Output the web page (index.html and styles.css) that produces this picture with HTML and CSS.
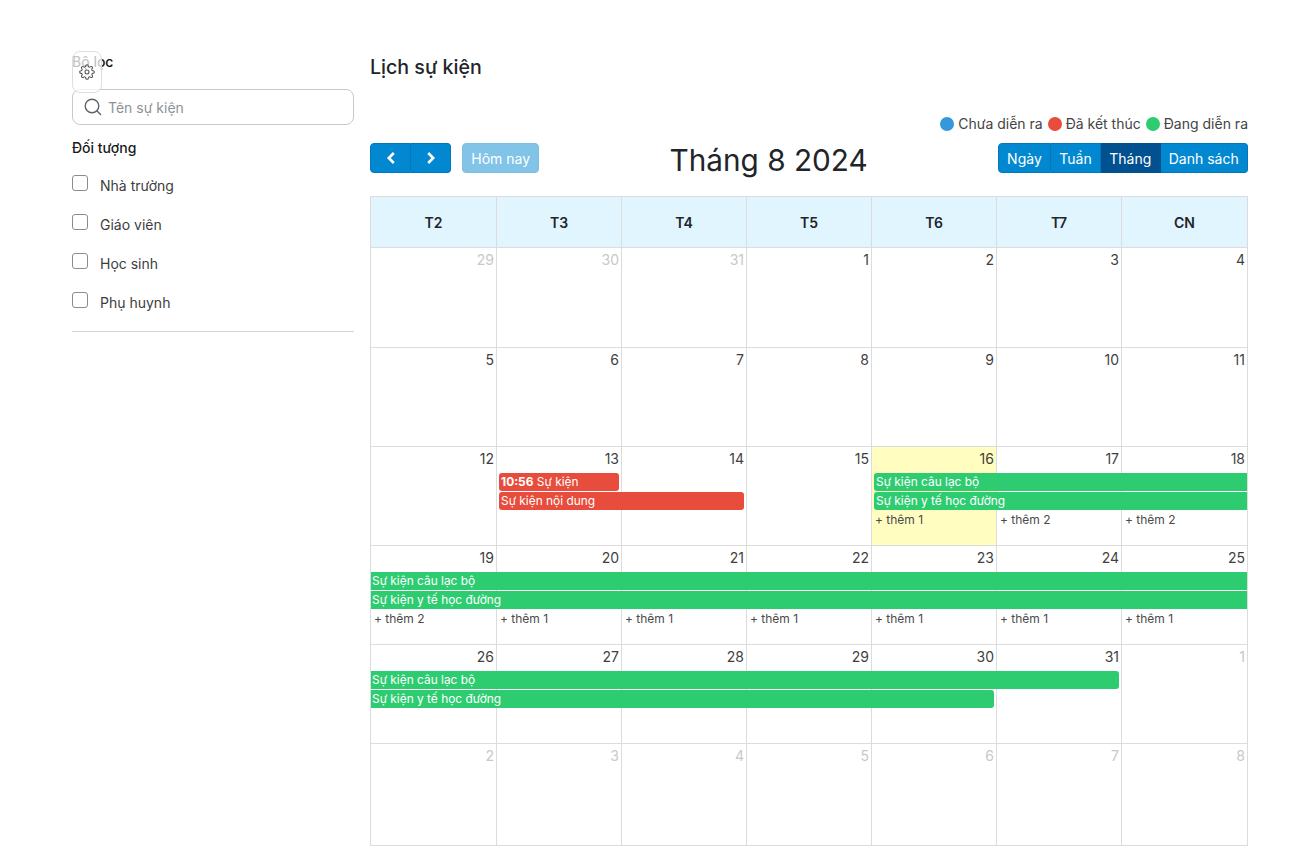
FILE: index.html
```html
<!DOCTYPE html>
<html lang="vi">
<head>
    <meta charset="UTF-8">
    <meta name="viewport" content="width=device-width, initial-scale=1.0">
    <title>Lịch sự kiện</title>
    <link rel="stylesheet" href="styles.css">
</head>
<body>
    <div class="page">
        <aside class="sidebar">
            <!-- settings button sits on top of the filter title -->
            <button class="gear-btn" type="button" aria-label="Cài đặt">
                <svg width="16" height="16" viewBox="0 0 24 24" fill="none" stroke="#555" stroke-width="1.6" stroke-linecap="round" stroke-linejoin="round"><circle cx="12" cy="12" r="3"/><path d="M19.4 15a1.65 1.65 0 0 0 .33 1.82l.06.06a2 2 0 0 1 0 2.83 2 2 0 0 1-2.83 0l-.06-.06a1.65 1.65 0 0 0-1.82-.33 1.65 1.65 0 0 0-1 1.51V21a2 2 0 0 1-2 2 2 2 0 0 1-2-2v-.09A1.65 1.65 0 0 0 9 19.4a1.65 1.65 0 0 0-1.82.33l-.06.06a2 2 0 0 1-2.83 0 2 2 0 0 1 0-2.83l.06-.06a1.65 1.65 0 0 0 .33-1.82 1.65 1.65 0 0 0-1.51-1H3a2 2 0 0 1-2-2 2 2 0 0 1 2-2h.09A1.65 1.65 0 0 0 4.6 9a1.65 1.65 0 0 0-.33-1.82l-.06-.06a2 2 0 0 1 0-2.83 2 2 0 0 1 2.83 0l.06.06a1.65 1.65 0 0 0 1.82.33H9a1.65 1.65 0 0 0 1-1.51V3a2 2 0 0 1 2-2 2 2 0 0 1 2 2v.09a1.65 1.65 0 0 0 1 1.51 1.65 1.65 0 0 0 1.82-.33l.06-.06a2 2 0 0 1 2.83 0 2 2 0 0 1 0 2.83l-.06.06a1.65 1.65 0 0 0-.33 1.82V9a1.65 1.65 0 0 0 1.51 1H21a2 2 0 0 1 2 2 2 2 0 0 1-2 2h-.09a1.65 1.65 0 0 0-1.51 1z"/></svg>
            </button>
            <h3 class="filter-title">Bộ lọc</h3>
            <div class="search">
                <svg width="20" height="20" viewBox="0 0 20 20" fill="none" stroke="#5f6368" stroke-width="1.4" stroke-linecap="round"><circle cx="9" cy="9" r="6.8"/><path d="M14 14l3.6 3.6"/></svg>
                <input type="text" placeholder="Tên sự kiện">
            </div>
            <h4 class="group-title">Đối tượng</h4>
            <ul class="checks">
                <li><span class="box"></span>Nhà trường</li>
                <li><span class="box"></span>Giáo viên</li>
                <li><span class="box"></span>Học sinh</li>
                <li><span class="box"></span>Phụ huynh</li>
            </ul>
            <hr class="divider">
        </aside>

        <main class="main">
            <h2 class="page-title">Lịch sự kiện</h2>
            <div class="legend">
                <span class="dot blue"></span>Chưa diễn ra
                <span class="dot red"></span>Đã kết thúc
                <span class="dot green"></span>Đang diễn ra
            </div>
            <div class="toolbar">
                <div class="toolbar-left">
                    <div class="btn-group">
                        <button class="btn btn-icon" type="button" aria-label="Trước"><svg width="14" height="14" viewBox="0 0 14 14" fill="none" stroke="#fff" stroke-width="2.6"><path d="M9.8 2L4.8 7l5 5"/></svg></button>
                        <button class="btn btn-icon" type="button" aria-label="Sau"><svg width="14" height="14" viewBox="0 0 14 14" fill="none" stroke="#fff" stroke-width="2.6"><path d="M4.2 2l5 5-5 5"/></svg></button>
                    </div>
                    <button class="btn btn-today" type="button">Hôm nay</button>
                </div>
                <h2 class="month-title">Tháng 8 2024</h2>
                <div class="btn-group">
                    <button class="btn" type="button">Ngày</button>
                    <button class="btn" type="button">Tuần</button>
                    <button class="btn active" type="button">Tháng</button>
                    <button class="btn" type="button">Danh sách</button>
                </div>
            </div>

            <div class="calendar">
                <div class="head-row">
                    <div class="head-cell">T2</div>
                    <div class="head-cell">T3</div>
                    <div class="head-cell">T4</div>
                    <div class="head-cell">T5</div>
                    <div class="head-cell">T6</div>
                    <div class="head-cell">T7</div>
                    <div class="head-cell">CN</div>
                </div>

                <div class="week week-first">
                    <div class="day c1 other">29</div>
                    <div class="day c2 other">30</div>
                    <div class="day c3 other">31</div>
                    <div class="day c4">1</div>
                    <div class="day c5">2</div>
                    <div class="day c6">3</div>
                    <div class="day c7">4</div>
                </div>

                <div class="week">
                    <div class="day c1">5</div>
                    <div class="day c2">6</div>
                    <div class="day c3">7</div>
                    <div class="day c4">8</div>
                    <div class="day c5">9</div>
                    <div class="day c6">10</div>
                    <div class="day c7">11</div>
                </div>

                <div class="week">
                    <div class="day c1">12</div>
                    <div class="day c2">13</div>
                    <div class="day c3">14</div>
                    <div class="day c4">15</div>
                    <div class="day c5 today">16</div>
                    <div class="day c6">17</div>
                    <div class="day c7">18</div>
                    <div class="event bg-red r2 c2 s1 end-gap start-gap"><b>10:56</b> Sự kiện</div>
                    <div class="event bg-red r3 c2 s2 end-gap start-gap">Sự kiện nội dung</div>
                    <div class="event bg-green r2 c5 s3 start-gap open-end">Sự kiện câu lạc bộ</div>
                    <div class="event bg-green r3 c5 s3 start-gap open-end">Sự kiện y tế học đường</div>
                    <div class="more r4 c5">+ thêm 1</div>
                    <div class="more r4 c6">+ thêm 2</div>
                    <div class="more r4 c7">+ thêm 2</div>
                </div>

                <div class="week">
                    <div class="day c1">19</div>
                    <div class="day c2">20</div>
                    <div class="day c3">21</div>
                    <div class="day c4">22</div>
                    <div class="day c5">23</div>
                    <div class="day c6">24</div>
                    <div class="day c7">25</div>
                    <div class="event bg-green r2 c1 s7 open-start open-end">Sự kiện câu lạc bộ</div>
                    <div class="event bg-green r3 c1 s7 open-start open-end">Sự kiện y tế học đường</div>
                    <div class="more r4 c1">+ thêm 2</div>
                    <div class="more r4 c2">+ thêm 1</div>
                    <div class="more r4 c3">+ thêm 1</div>
                    <div class="more r4 c4">+ thêm 1</div>
                    <div class="more r4 c5">+ thêm 1</div>
                    <div class="more r4 c6">+ thêm 1</div>
                    <div class="more r4 c7">+ thêm 1</div>
                </div>

                <div class="week">
                    <div class="day c1">26</div>
                    <div class="day c2">27</div>
                    <div class="day c3">28</div>
                    <div class="day c4">29</div>
                    <div class="day c5">30</div>
                    <div class="day c6">31</div>
                    <div class="day c7 other">1</div>
                    <div class="event bg-green r2 c1 s6 open-start end-gap">Sự kiện câu lạc bộ</div>
                    <div class="event bg-green r3 c1 s5 open-start end-gap">Sự kiện y tế học đường</div>
                </div>

                <div class="week week-last">
                    <div class="day c1 other">2</div>
                    <div class="day c2 other">3</div>
                    <div class="day c3 other">4</div>
                    <div class="day c4 other">5</div>
                    <div class="day c5 other">6</div>
                    <div class="day c6 other">7</div>
                    <div class="day c7 other">8</div>
                </div>
            </div>
        </main>
    </div>
</body>
</html>
```

FILE: styles.css
```css
* {
    box-sizing: border-box;
}

body {
    margin: 0;
    font-family: Inter, "Noto Sans", sans-serif;
    font-size: 14px;
    color: #212529;
    background-color: #fff;
}

.page {
    display: flex;
    gap: 16px;
    padding: 0 42px 0 72px;
}

/* Sidebar */
.sidebar {
    position: relative;
    width: 282px;
    padding-top: 53px;
}

.gear-btn {
    position: absolute;
    left: 0;
    top: 51px;
    width: 30px;
    height: 42px;
    padding: 0;
    display: flex;
    align-items: center;
    justify-content: center;
    background: rgba(255, 255, 255, 0.75);
    border: 1px solid #dedede;
    border-radius: 8px;
}

.filter-title {
    margin: 0;
    font-size: 14px;
    line-height: 17px;
    font-weight: 500;
    color: #111;
}

.search {
    display: flex;
    align-items: center;
    gap: 5px;
    height: 36px;
    margin-top: 19px;
    padding: 0 10px;
    border: 1px solid #c8c8c8;
    border-radius: 8px;
}

.search input {
    flex: 1;
    min-width: 0;
    border: 0;
    outline: 0;
    padding: 0;
    font: inherit;
    color: #212529;
}

.search input::placeholder {
    color: #8e9296;
}

.group-title {
    margin: 14px 0 0;
    font-size: 14px;
    line-height: 17px;
    font-weight: 500;
    color: #1a1a1a;
}

.checks {
    list-style: none;
    margin: 11px 0 0;
    padding: 0;
}

.checks li {
    display: flex;
    align-items: flex-start;
    height: 39px;
    padding-top: 10px;
    line-height: 17px;
    color: #3d3d3d;
}

.box {
    width: 16px;
    height: 16px;
    margin: -2px 12px 0 0;
    border: 1px solid #8c8c8c;
    border-radius: 3px;
}

.divider {
    margin: 8px 0 0;
    border: 0;
    border-top: 1px solid #d6d6d6;
}

/* Main */
.main {
    width: 878px;
    padding-top: 55px;
}

.page-title {
    margin: 0;
    font-size: 19.6px;
    line-height: 24px;
    font-weight: 500;
    color: #212529;
}

.legend {
    display: flex;
    align-items: center;
    justify-content: flex-end;
    gap: 4px;
    margin-top: 36px;
    line-height: 17px;
    color: #444;
}

.dot {
    width: 14px;
    height: 14px;
    margin-left: 1px;
    border-radius: 50%;
}

.dot.blue { background-color: #3498db; }
.dot.red { background-color: #e74c3c; }
.dot.green { background-color: #2ecc71; }

.toolbar {
    display: flex;
    align-items: center;
    justify-content: space-between;
    height: 30px;
    margin-top: 11px;
}

.toolbar-left {
    display: flex;
    gap: 11px;
}

.month-title {
    align-self: flex-start;
    margin: 0;
    font-size: 29.75px;
    line-height: 34px;
    font-weight: 400;
    color: #212529;
}

.btn-group {
    display: flex;
}

.btn {
    height: 30px;
    padding: 0 8.25px;
    font: inherit;
    color: #fff;
    background-color: #0288d1;
    border: 1px solid #0277bd;
    border-left-width: 0;
    border-radius: 0;
}

.btn-group .btn:first-child {
    border-left-width: 1px;
    border-radius: 4px 0 0 4px;
}

.btn-group .btn:last-child {
    border-radius: 0 4px 4px 0;
}

.btn.active {
    background-color: #01508f;
    border-color: #01508f;
}

.btn-icon {
    width: 40px;
    padding: 0;
    display: flex;
    align-items: center;
    justify-content: center;
}

.btn-group .btn-icon:first-child {
    width: 41px;
}

.btn-today {
    background-color: #81c4e8;
    border: 1px solid #81bfdf;
    border-radius: 4px;
}

/* Calendar */
.calendar {
    margin-top: 23px;
    margin-bottom: 15px;
}

.head-row,
.week {
    display: grid;
    grid-template-columns: 126px 125px 125px 125px 125px 125px 127px;
}

.head-cell {
    height: 51px;
    display: flex;
    align-items: center;
    justify-content: center;
    font-weight: 600;
    color: #212529;
    background-color: #e1f5fe;
    border: 1px solid #dcdcdc;
    border-width: 1px 0 0 1px;
}

.head-cell:last-child,
.day.c7 {
    border-right-width: 1px;
}

.week {
    height: 99px;
    grid-template-rows: 27px 19px 19px 19px 1fr;
}

.week-first {
    height: 100px;
}

.week-last {
    height: 103px;
}

.day {
    grid-row: 1 / -1;
    padding: 2px 2px 0 0;
    line-height: 20px;
    text-align: right;
    color: #3f3f3f;
    border: 0 solid #dcdcdc;
    border-width: 1px 0 0 1px;
}

.week-last .day {
    border-bottom-width: 1px;
}

.day.other {
    color: #c8c8c8;
}

.day.today {
    background-color: #fffdc0;
}

.event {
    height: 18px;
    padding: 0 1px;
    overflow: hidden;
    font-size: 11.9px;
    line-height: 18px;
    white-space: nowrap;
    color: #fff;
    border-radius: 3px;
}

.event b {
    font-weight: 700;
}

.bg-red { background-color: #e74c3c; }
.bg-green { background-color: #2ecc71; }

.start-gap { margin-left: 3px; padding-left: 2px; }
.end-gap { margin-right: 2px; }
.open-start { margin-left: 1px; border-top-left-radius: 0; border-bottom-left-radius: 0; }
.open-end { margin-right: 1px; border-top-right-radius: 0; border-bottom-right-radius: 0; }

.more {
    padding-left: 4px;
    font-size: 12px;
    line-height: 17px;
    color: #4a4a4a;
}

.r2 { grid-row: 2; }
.r3 { grid-row: 3; }
.r4 { grid-row: 4; }

.c1 { grid-column-start: 1; }
.c2 { grid-column-start: 2; }
.c3 { grid-column-start: 3; }
.c4 { grid-column-start: 4; }
.c5 { grid-column-start: 5; }
.c6 { grid-column-start: 6; }
.c7 { grid-column-start: 7; }

.s1 { grid-column-end: span 1; }
.s2 { grid-column-end: span 2; }
.s3 { grid-column-end: span 3; }
.s5 { grid-column-end: span 5; }
.s6 { grid-column-end: span 6; }
.s7 { grid-column-end: span 7; }
```
